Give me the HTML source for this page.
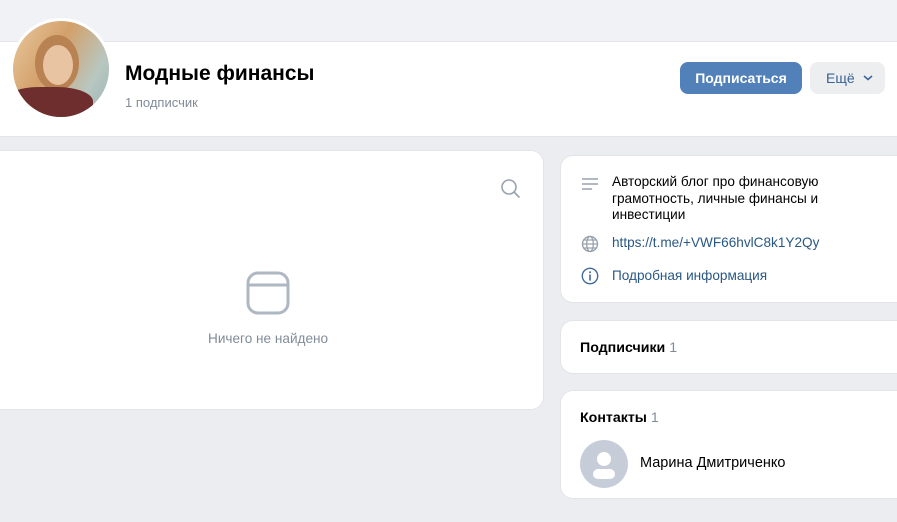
<!DOCTYPE html>
<html><head><meta charset="utf-8"><style>
*{box-sizing:border-box;margin:0;padding:0}
body{width:897px;height:522px;overflow:hidden;background:#ebedf0;font-family:"Liberation Sans",sans-serif;position:relative}
.top{position:absolute;left:0;top:0;width:897px;height:42px;background:#f0f2f5}
.card{position:absolute;background:#fff;border-radius:12px;box-shadow:0 0 0 1px #e3e4e8}
.av{position:absolute;left:10px;top:18px;width:102px;height:102px;border-radius:50%;border:3px solid #fff;background:linear-gradient(120deg,#e9c9a0 0,#d3a06a 40%,#b8c7c0 75%,#9bb4b6 100%);overflow:hidden}
.t{position:absolute;white-space:nowrap}
</style></head><body>
<div class="top"></div>
<div class="card" style="left:-12px;top:42px;width:930px;height:94px;border-radius:0 0 12px 12px"></div>
<div class="av"><div style="position:absolute;left:22px;top:14px;width:44px;height:56px;border-radius:50%;background:#b98252"></div><div style="position:absolute;left:30px;top:24px;width:30px;height:40px;border-radius:50%;background:#e8c4a2"></div><div style="position:absolute;left:-10px;bottom:-6px;width:90px;height:36px;border-radius:40%;background:#6e2e2e"></div></div>
<div class="t" style="left:125px;top:62px;font-size:21px;font-weight:bold;color:#000">Модные финансы</div>
<div class="t" style="left:125px;top:95px;font-size:13px;color:#818c99">1 подписчик</div>
<div style="position:absolute;left:680px;top:62px;width:122px;height:32px;background:#5181b8;border-radius:8px;color:#fff;font-size:14px;font-weight:bold;text-align:center;line-height:32px">Подписаться</div>
<div style="position:absolute;left:810px;top:62px;width:75px;height:32px;background:#edeef0;border-radius:8px;color:#3a6294;font-size:14px;line-height:32px;padding-left:16px">Ещё <svg width="10" height="6" style="margin-left:4px;vertical-align:2px"><path d="M1 1l4 3.5L9 1" stroke="#3a6294" stroke-width="1.5" fill="none"/></svg></div>

<div class="card" style="left:-12px;top:151px;width:555px;height:258px"></div>
<svg style="position:absolute;left:500px;top:178px" width="22" height="22"><circle cx="9" cy="9" r="7" stroke="#99a2ad" stroke-width="1.6" fill="none"/><path d="M14 14l5 5" stroke="#99a2ad" stroke-width="1.6" stroke-linecap="round"/></svg>
<svg style="position:absolute;left:246px;top:271px" width="44" height="44"><rect x="2" y="2" width="40" height="40" rx="10" stroke="#aeb7c2" stroke-width="3" fill="none"/><path d="M2 14h40" stroke="#aeb7c2" stroke-width="3"/></svg>
<div class="t" style="left:208px;top:331px;font-size:13.6px;color:#818c99">Ничего не найдено</div>

<div class="card" style="left:561px;top:156px;width:350px;height:146px"></div>
<svg style="position:absolute;left:581px;top:177px" width="18" height="16"><path d="M1 2h16M1 7h16M1 12h10" stroke="#99a2ad" stroke-width="1.4"/></svg>
<div class="t" style="left:612px;top:174px;font-size:13.6px;line-height:16.5px;color:#000">Авторский блог про финансовую<br>грамотность, личные финансы и<br>инвестиции</div>
<svg style="position:absolute;left:581px;top:235px" width="18" height="18"><circle cx="9" cy="9" r="7.5" stroke="#99a2ad" stroke-width="1.4" fill="none"/><ellipse cx="9" cy="9" rx="3.3" ry="7.5" stroke="#99a2ad" stroke-width="1.3" fill="none"/><path d="M1.5 9h15M3 5h12M3 13h12" stroke="#99a2ad" stroke-width="1.2"/></svg>
<div class="t" style="left:612px;top:235px;font-size:13.6px;color:#2a5885">https://t.me/+VWF66hvlC8k1Y2Qy</div>
<svg style="position:absolute;left:581px;top:267px" width="18" height="18"><circle cx="9" cy="9" r="7.7" stroke="#3f6ba0" stroke-width="1.4" fill="none"/><path d="M9 8v5" stroke="#3f6ba0" stroke-width="1.6" stroke-linecap="round"/><circle cx="9" cy="5.2" r="1" fill="#3f6ba0"/></svg>
<div class="t" style="left:612px;top:268px;font-size:13.6px;color:#2a5885">Подробная информация</div>

<div class="card" style="left:561px;top:321px;width:350px;height:52px"></div>
<div class="t" style="left:580px;top:340px;font-size:14.2px;font-weight:bold;color:#000">Подписчики <span style="font-weight:normal;color:#818c99">1</span></div>

<div class="card" style="left:561px;top:391px;width:350px;height:107px"></div>
<div class="t" style="left:580px;top:410px;font-size:14.2px;font-weight:bold;color:#000">Контакты <span style="font-weight:normal;color:#818c99">1</span></div>
<div style="position:absolute;left:580px;top:440px;width:48px;height:48px;border-radius:50%;background:#c6cdd9;overflow:hidden"><div style="position:absolute;left:17px;top:12px;width:14px;height:14px;border-radius:50%;background:#fff"></div><div style="position:absolute;left:13px;top:29px;width:22px;height:10px;border-radius:6px;background:#fff"></div></div>
<div class="t" style="left:640px;top:455px;font-size:14.5px;color:#000">Марина Дмитриченко</div>
</body></html>
